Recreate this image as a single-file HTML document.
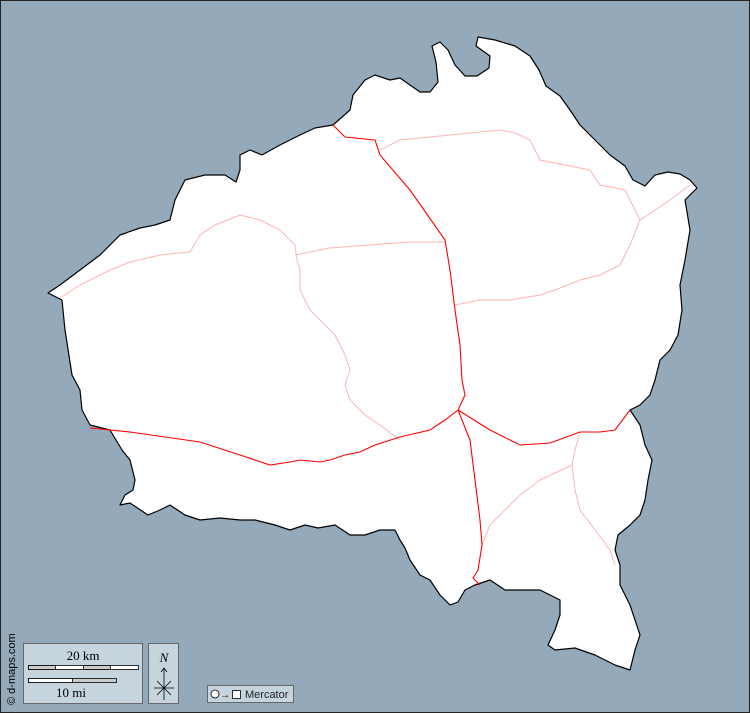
<!DOCTYPE html>
<html><head><meta charset="utf-8"><style>
html,body{margin:0;padding:0;background:#94aabb;}
svg{display:block}
</style></head><body>
<svg width="750" height="713" viewBox="0 0 750 713" xmlns="http://www.w3.org/2000/svg">
<rect x="0.5" y="0.5" width="749" height="712" fill="#94aabb" stroke="#222" stroke-width="1"/>
<path fill="#fff" stroke="#000" stroke-width="1.2" stroke-linejoin="round" d="M333,125 L350,110 L353,95 L365,80 L375,75 L390,80 L400,78 L410,85 L420,92 L430,92 L438,82 L436,62 L432,46 L440,42 L448,50 L455,65 L465,76 L477,76 L489,68 L490,56 L476,46 L478,37 L495,40 L515,46 L530,56 L539,70 L546,86 L560,96 L570,110 L580,125 L595,140 L610,155 L625,166 L633,180 L645,186 L655,175 L668,172 L680,174 L690,180 L697,188 L685,200 L690,230 L685,260 L680,285 L682,310 L678,335 L670,350 L660,360 L655,380 L650,395 L640,405 L630,410 L640,425 L645,445 L652,460 L648,480 L645,500 L640,515 L630,525 L618,535 L615,550 L620,565 L620,585 L630,605 L640,635 L635,650 L630,670 L615,665 L595,655 L575,648 L555,650 L548,645 L555,630 L560,615 L560,600 L550,595 L540,590 L525,590 L505,590 L490,580 L475,585 L465,590 L458,602 L450,605 L440,595 L430,580 L420,575 L410,560 L405,548 L400,540 L395,530 L380,530 L365,535 L350,535 L335,525 L318,528 L305,525 L290,530 L275,525 L255,520 L240,520 L220,518 L200,520 L185,515 L170,505 L160,510 L148,515 L130,503 L120,505 L125,495 L133,490 L135,480 L130,460 L122,450 L110,430 L90,425 L82,410 L80,390 L72,375 L65,330 L62,300 L48,293 L60,285 L80,270 L100,255 L120,235 L140,228 L155,225 L170,220 L175,200 L185,180 L205,175 L225,175 L236,182 L240,170 L240,155 L250,150 L262,155 L280,145 L300,135 L315,128 Z"/>
<g fill="none" stroke="#ffb4b4" stroke-width="1">
<path d="M380,150 L400,140 L450,135 L500,130 L515,133 L530,140 L540,160 L590,170 L600,185 L625,190 L640,220 L648,215 L670,200 L690,185"/>
<path d="M640,220 L630,245 L620,265 L600,275 L580,280 L555,290 L540,295 L510,300 L480,300 L455,305"/>
<path d="M60,298 L80,285 L110,270 L130,262 L160,255 L190,252 L200,235 L215,225 L240,215 L260,220 L280,230 L295,245 L297,260 L300,270 L300,290 L310,310 L320,320 L335,335 L345,355 L350,370 L345,385 L350,400 L365,415 L380,425 L400,440"/>
<path d="M295,255 L330,248 L370,245 L410,242 L445,242"/>
<path d="M580,432 L575,450 L572,465 L575,490 L580,510 L595,530 L610,550 L615,565"/>
<path d="M572,465 L540,480 L520,495 L500,515 L490,525 L482,545"/>
</g>
<g fill="none" stroke="#f00" stroke-width="1.1">
<path d="M333,125 L345,137 L375,140 L380,155 L410,190 L445,240 L450,270 L455,310 L460,345 L462,380 L465,395 L458,410 L470,440 L475,480 L480,520 L482,545 L478,570 L473,578 L480,585"/>
<path d="M90,428 L130,432 L200,442 L240,455 L270,465 L290,462 L300,460 L320,462 L330,460 L345,455 L360,452 L375,445 L400,437 L430,430 L445,420 L458,410"/>
<path d="M458,410 L490,430 L520,445 L550,443 L580,432 L600,432 L615,430 L630,410"/>
</g>
<text transform="translate(15,705) rotate(-90)" font-family="Liberation Sans, sans-serif" font-size="11" fill="#000">© d-maps.com</text>
<rect x="23.5" y="643.5" width="119" height="60" fill="#c5d4dd" stroke="#666"/>
<text x="83" y="660" text-anchor="middle" font-family="Liberation Serif, serif" font-size="13">20 km</text>
<rect x="28.5" y="665.5" width="110" height="4" fill="#fff" stroke="#000" stroke-width="0.8"/>
<rect x="28.5" y="665.5" width="27" height="4" fill="#ccc" stroke="#000" stroke-width="0.8"/>
<rect x="83.5" y="665.5" width="27" height="4" fill="#ccc" stroke="#000" stroke-width="0.8"/>
<rect x="28.5" y="678.5" width="88" height="4" fill="#ccc" stroke="#000" stroke-width="0.8"/>
<rect x="28.5" y="678.5" width="44" height="4" fill="#fff" stroke="#000" stroke-width="0.8"/>
<text x="71" y="697" text-anchor="middle" font-family="Liberation Serif, serif" font-size="13">10 mi</text>
<rect x="148.5" y="643.5" width="30" height="60" fill="#c5d4dd" stroke="#666"/>
<text x="164" y="662" text-anchor="middle" font-family="Liberation Serif, serif" font-style="italic" font-size="13">N</text>
<path d="M164,668 L164,700 M154,688 L174,688 M157,681 L171,695 M171,681 L157,695 M161,672 L164,668 L167,672" stroke="#000" stroke-width="0.8" fill="none"/>
<rect x="207.5" y="685.5" width="86" height="17" fill="#c5d4dd" stroke="#666"/>
<circle cx="215" cy="694" r="4" fill="#fff" stroke="#000" stroke-width="0.8"/>
<text x="220" y="698" font-family="Liberation Sans, sans-serif" font-size="10">→</text>
<rect x="232.5" y="690.5" width="8" height="8" fill="#fff" stroke="#000" stroke-width="0.8"/>
<text x="245" y="698" font-family="Liberation Sans, sans-serif" font-size="11" fill="#222">Mercator</text>
</svg>
</body></html>
